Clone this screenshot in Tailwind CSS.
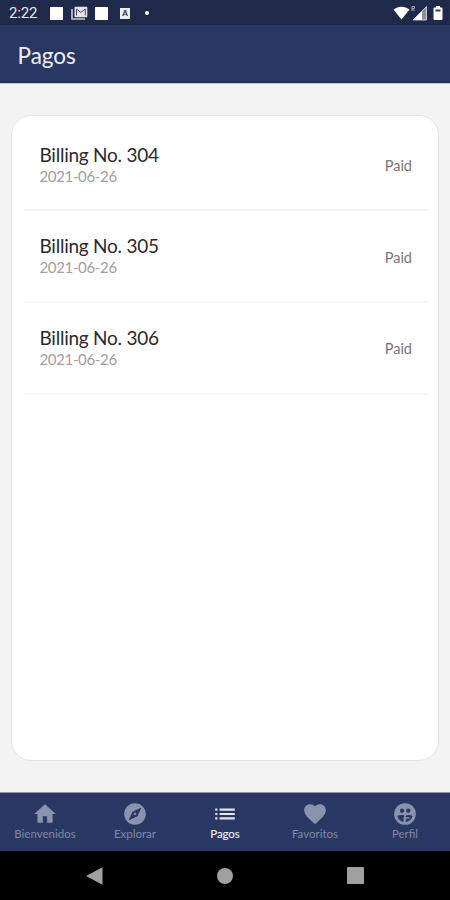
<!DOCTYPE html>
<html lang="es">
<head>
<meta charset="utf-8">
<title>Pagos</title>
<script src="https://cdn.jsdelivr.net/npm/@tailwindcss/browser@4"></script>
</head>
<body class="w-[450px] h-[900px] flex flex-col overflow-hidden bg-[#f3f3f3] font-['Lato',sans-serif]">
  <div class="h-[25px] shrink-0 bg-[#1f294a] flex items-center justify-between pl-[9px] pr-[7px] pt-px text-white">
    <div class="flex items-center">
      <span class="w-[40px] text-[15px] leading-none tracking-[-0.2px] text-[#e6e8ee] font-['Roboto',sans-serif]">2:22</span>
      <span class="ml-px size-[13px] bg-white"></span>
      <svg class="ml-[8px] w-[17px] h-[14px]" viewBox="0 0 17 14"><path d="M1 3v10h13" fill="none" stroke="#c9ccd4" stroke-width="1.6"/><rect x="3.5" y=".7" width="12.8" height="10.6" rx="1" fill="#e4e5ea"/><path d="M5.500 9.500V3l4.400 3.400L14.300 3v6.500" fill="none" stroke="#4b5060" stroke-width="1"/></svg>
      <span class="ml-[7px] size-[13px] bg-white"></span>
      <span class="ml-[12px] w-[10px] h-[11px] bg-[#eceef2] text-[#20283f] text-[8px] font-bold leading-[11px] text-center">A</span>
      <span class="ml-[15px] size-[4px] rounded-full bg-white"></span>
    </div>
    <div class="flex items-center">
      <svg class="w-[17px] h-[14px]" viewBox="0 0 17 14"><path d="M.5 3.600C5-.3 12-.3 16.500 3.600L8.500 13.600z" fill="#fff"/></svg>
      <svg class="ml-[1px] w-[17px] h-[16px]" viewBox="0 0 17 16"><path d="M2 15L15.500 1.500V15z" fill="#8b90a0"/><path d="M2 15L11 6v9z" fill="#fff"/><path d="M2 15L15.500 1.500V15z" fill="none" stroke="#e4e6ec" stroke-width=".8"/><path d="M1 6V1.500h2.500v2H1L3.800 6" fill="none" stroke="#a7abb8" stroke-width="1"/></svg>
      <svg class="ml-[5px] w-[10px] h-[14px]" viewBox="0 0 10 14"><path d="M3 0h4v1.500h1.500q1 0 1 1V13q0 1-1 1h-7q-1 0-1-1V2.500q0-1 1-1H3z" fill="#fff"/><path d="M2.500 3.500h5v2h-5z" fill="#3c4257"/></svg>
    </div>
  </div>
  <header class="h-[58px] shrink-0 bg-[#293863] border-b border-[#1c2a54] flex items-center pl-[17.500px] pt-[5px]">
    <h1 class="text-[22.500px] leading-7 text-[#eef0f6]">Pagos</h1>
  </header>
  <main class="flex-1 flex flex-col px-[11px] pt-[31px] pb-[31px] border-t border-[#c9cbd5]">
    <section class="flex-1 rounded-[20px] bg-white border border-[#e5e5e5] pl-[12px] pr-[10px] pt-[3.500px]">
      <div class="h-[91.700px] flex items-center justify-between pl-[15.500px] pr-[16px] border-b-2 border-[#f4f4f4]">
        <div class="pt-[1.500px]"><div class="text-[19px] tracking-[-0.240px] leading-[22px] text-[#2a2a2a]">Billing No. 304</div><div class="text-[15px] tracking-[-0.350px] leading-[21px] text-[#a0a0a0]">2021-06-26</div></div>
        <span class="text-[14.500px] text-[#777] pt-[4px]">Paid</span>
      </div>
      <div class="h-[91.700px] flex items-center justify-between pl-[15.500px] pr-[16px] border-b-2 border-[#f9f9f9]">
        <div class="pt-[1.500px]"><div class="text-[19px] tracking-[-0.240px] leading-[22px] text-[#2a2a2a]">Billing No. 305</div><div class="text-[15px] tracking-[-0.350px] leading-[21px] text-[#a0a0a0]">2021-06-26</div></div>
        <span class="text-[14.500px] text-[#777] pt-[4px]">Paid</span>
      </div>
      <div class="h-[91.700px] flex items-center justify-between pl-[15.500px] pr-[16px] border-b-2 border-[#f9f9f9]">
        <div class="pt-[2px]"><div class="text-[19px] tracking-[-0.240px] leading-[22px] text-[#2a2a2a]">Billing No. 306</div><div class="text-[15px] tracking-[-0.350px] leading-[21px] text-[#a0a0a0]">2021-06-26</div></div>
        <span class="text-[14.500px] text-[#777] pt-[3px]">Paid</span>
      </div>
    </section>
  </main>
  <nav class="h-[59px] shrink-0 bg-[#293863] border-t border-[#8d96ae] grid grid-cols-5 text-[#7f89a5] text-[11.500px] leading-[14px] pt-[8px]">
    <div class="flex flex-col items-center"><svg class="size-[26px]" viewBox="0 0 24 24" fill="#8a93ad"><path d="M10 20v-6h4v6h5v-8h3L12 3 2 12h3v8z"/></svg><span>Bienvenidos</span></div>
    <div class="flex flex-col items-center"><svg class="size-[26px]" viewBox="0 0 24 24" fill="#8a93ad"><path d="M12 10.900c-.61 0-1.100.49-1.100 1.100s.49 1.100 1.100 1.100c.61 0 1.100-.49 1.100-1.100s-.49-1.100-1.100-1.100zM12 2C6.480 2 2 6.480 2 12s4.480 10 10 10 10-4.480 10-10S17.520 2 12 2zm2.190 12.190L6 18l3.810-8.190L18 6l-3.810 8.190z"/></svg><span>Explorar</span></div>
    <div class="flex flex-col items-center text-white"><svg class="size-[26px]" viewBox="0 0 24 24" fill="#e3e6ee"><path d="M3 7h2v2H3zM3 11h2v2H3zM3 15h2v2H3zM7 7h14v2H7zM7 11h14v2H7zM7 15h14v2H7z"/></svg><span class="tracking-[-0.100px]">Pagos</span></div>
    <div class="flex flex-col items-center"><svg class="size-[26px]" viewBox="0 0 24 24" fill="#8a93ad"><path d="M12 21.350l-1.450-1.320C5.400 15.360 2 12.280 2 8.500 2 5.420 4.420 3 7.500 3c1.740 0 3.410.81 4.500 2.090C13.090 3.810 14.760 3 16.500 3 19.580 3 22 5.420 22 8.500c0 3.780-3.400 6.860-8.550 11.540L12 21.350z"/></svg><span>Favoritos</span></div>
    <div class="flex flex-col items-center"><svg class="size-[26px]" viewBox="0 0 24 24"><circle cx="12" cy="12" r="10" fill="#8a93ad"/><g fill="#293863"><circle cx="9.300" cy="9" r="2"/><circle cx="15" cy="9" r="2"/><path d="M4.900 13.600C7 12.700 9.500 12.700 11.300 13.300V14.200C10.400 14.900 10.600 17 10.700 19.400C7.800 18.900 5.500 16.600 4.900 13.600zM12.600 13.400C14.500 12.700 17 12.700 19 13.600C18.400 16.600 16 19 12.700 19.500V16.400H16V15H12.600z"/></g></svg><span>Perfil</span></div>
  </nav>
  <footer class="h-[49px] shrink-0 bg-black flex items-center justify-between pl-[86px] pr-[86px]">
    <svg class="w-[17px] h-[18px]" viewBox="0 0 17 18"><path d="M0 9L16.500.3v17.400z" fill="#a0a0a0"/></svg>
    <span class="size-[16px] rounded-full bg-[#a0a0a0]"></span>
    <span class="size-[17px] rounded-[1px] bg-[#a0a0a0]"></span>
  </footer>
</body>
</html>
